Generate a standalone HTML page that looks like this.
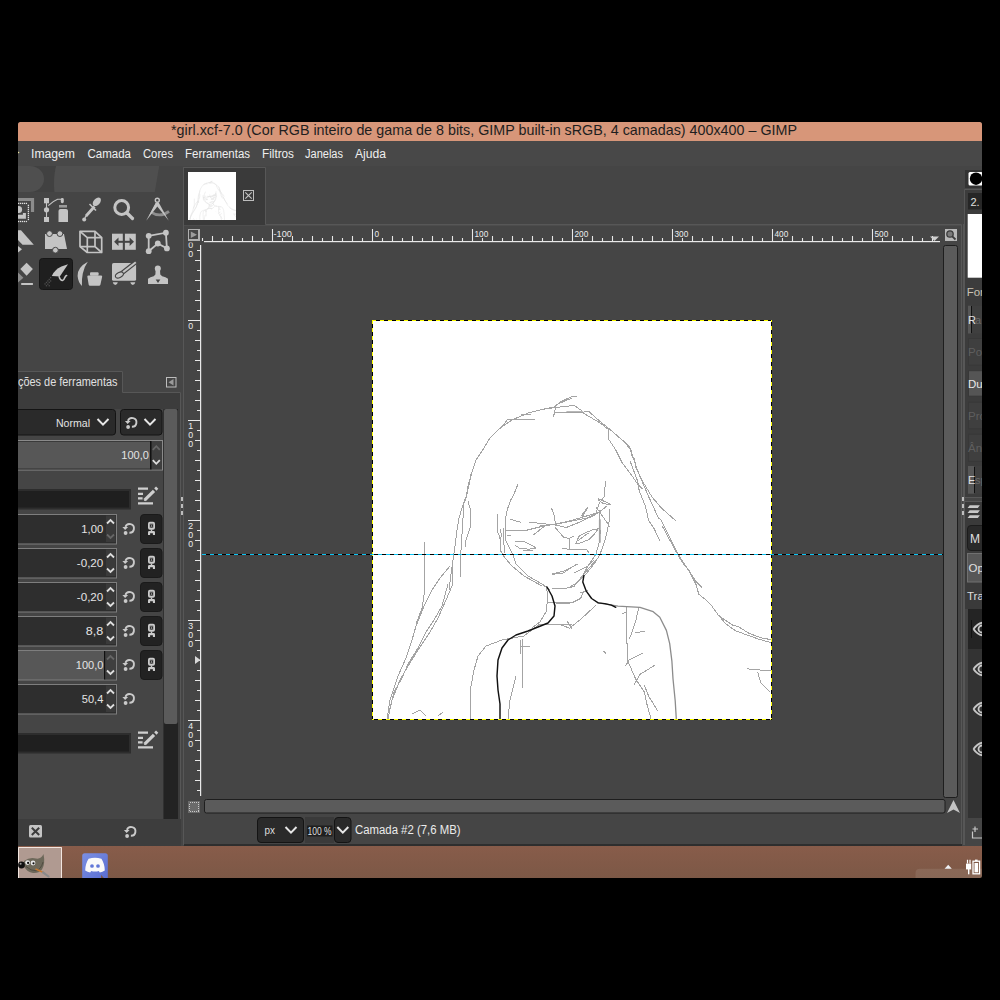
<!DOCTYPE html>
<html><head><meta charset="utf-8">
<style>
*{margin:0;padding:0;box-sizing:border-box}
html,body{width:1000px;height:1000px;background:#000;overflow:hidden}
svg{position:absolute;left:0;top:0;font-family:"Liberation Sans",sans-serif}
</style></head><body>
<svg width="1000" height="1000" viewBox="0 0 1000 1000">
<defs>
 <clipPath id="scr"><rect x="18" y="122" width="964" height="756"/></clipPath>
 <g id="reset"><path d="M-3.6,-1.6 A4.4,4.4 0 1 1 0.4,4.3" fill="none" stroke="#cacaca" stroke-width="1.9"/><path d="M-6.6,-1.4 L-0.9,-1.4 L-3.9,1.4 Z" fill="#cacaca"/><circle cx="-3.4" cy="4.5" r="1.9" fill="#cacaca"/></g>
 <g id="chev"><path d="M-5.5,-3 L0,2.6 L5.5,-3" fill="none" stroke="#e6e6e6" stroke-width="2"/></g>
 <g id="chain"><rect x="-2.6" y="-5.75" width="5.2" height="6" rx="1" fill="none" stroke="#cacaca" stroke-width="1.8"/><path d="M-0.9,-4.5 L0,-2.8 L0.9,-4.5 M-0.9,-0.9 L0,-2.6 L0.9,-0.9" fill="none" stroke="#bbb" stroke-width="0.6"/><path d="M-3.5,6.6 V3.9 Q-3.5,2.6 -2.2,2.6 H2.2 Q3.5,2.6 3.5,3.9 V6.6 H1.4 V4.7 H-1.4 V6.6 Z" fill="#cacaca"/><rect x="-0.7" y="1" width="1.4" height="1.8" fill="#cacaca"/></g>
 <g id="edit"><path d="M0,1.6 h10 M0,6.8 h5 M0,11.4 h4.6 M0,16.4 h15" stroke="#cfcfcf" stroke-width="2.3"/><path d="M6.6,13.2 L16,3.8" stroke="#cfcfcf" stroke-width="3.2"/><path d="M17.3,2.5 L19.2,0.6" stroke="#cfcfcf" stroke-width="3.2"/><path d="M5.8,12.6 L6.2,14 L7.5,13.6 Z" fill="#cfcfcf"/></g>
 <g id="upch"><path d="M-3.5,1.8 L0,-1.8 L3.5,1.8" fill="none" stroke-width="1.8"/></g>
</defs>
<g clip-path="url(#scr)">
<!-- screen base -->
<path d="M18,124.5 Q18,122 20.5,122 H979.5 Q982,122 982,124.5 V878 H18 Z" fill="#454545"/>
<!-- title bar -->
<rect x="18" y="141" width="964" height="25" fill="#484848"/>
<path d="M18,124.5 Q18,122 20.5,122 H979.5 Q982,122 982,124.5 V141 H18 Z" fill="#D79679"/>
<text x="171" y="135" font-size="14.3" fill="#1e1e1e" textLength="626" lengthAdjust="spacingAndGlyphs">*girl.xcf-7.0 (Cor RGB inteiro de gama de 8 bits, GIMP built-in sRGB, 4 camadas) 400x400 – GIMP</text>
<!-- menu -->
<g font-size="12.5" fill="#efefef">
<text x="31" y="158" textLength="44" lengthAdjust="spacingAndGlyphs">Imagem</text>
<text x="87.5" y="158" textLength="43.5" lengthAdjust="spacingAndGlyphs">Camada</text>
<text x="143" y="158" textLength="30" lengthAdjust="spacingAndGlyphs">Cores</text>
<text x="185" y="158" textLength="65" lengthAdjust="spacingAndGlyphs">Ferramentas</text>
<text x="262" y="158" textLength="32" lengthAdjust="spacingAndGlyphs">Filtros</text>
<text x="305" y="158" textLength="38" lengthAdjust="spacingAndGlyphs">Janelas</text>
<text x="355" y="158" textLength="31" lengthAdjust="spacingAndGlyphs">Ajuda</text>
</g>
<circle cx="18.5" cy="152.5" r="0.8" fill="#e8e0a0"/>

<!-- ===== LEFT DOCK ===== -->
<!-- toolbox wilber area -->
<path d="M28,166 H56 Q53,179 54.5,192 H28 Z" fill="#414141"/><path d="M18,166 H30 A14,13 0 0 1 44,179 A14,13 0 0 1 30,192 H18 Z" fill="#4f4f4f"/>
<path d="M56,166 H159.2 L154.8,192 H54.5 Q53,179 56,166 Z" fill="#4f4f4f"/>
<!-- selected tool bg -->
<rect x="39.5" y="258.5" width="33" height="31" rx="3" fill="#1f1f1f" stroke="#161616"/>

<!-- tool options tab -->
<rect x="18" y="392" width="163" height="427" fill="#3c3c3c"/>
<rect x="18" y="371" width="105" height="21" fill="#3c3c3c"/>
<path d="M18,371.5 H122.5 V392.5 H180.5 V819" fill="none" stroke="#575757"/>
<text x="18" y="386" font-size="12.5" fill="#e0e0e0" textLength="99.5" lengthAdjust="spacingAndGlyphs">ções de ferramentas</text>
<rect x="166.5" y="377.5" width="9.5" height="9.5" fill="#454545" stroke="#bdbdbd"/>
<path d="M168.5,382.2 L173.5,379 V385.5 Z" fill="#9a9a9a"/>

<rect x="18" y="409" width="145.5" height="410" fill="#454545"/>
<!-- Mode combo -->
<rect x="14" y="409.5" width="101.5" height="25.5" rx="3" fill="#2a2a2a" stroke="#141414"/>
<text x="56" y="426.5" font-size="11.5" fill="#e4e4e4" textLength="34" lengthAdjust="spacingAndGlyphs">Normal</text>
<use href="#chev" x="103" y="422"/>
<rect x="120.5" y="409.5" width="41.5" height="25.5" rx="3" fill="#2a2a2a" stroke="#141414"/>
<use href="#reset" x="131.5" y="422.5"/>
<use href="#chev" x="150" y="422"/>

<!-- opacity slider -->
<rect x="14.5" y="440.5" width="148" height="29.5" fill="#575757" stroke="#8a8a8a"/><rect x="14" y="441" width="136" height="1" fill="#3a3a3a"/><rect x="14" y="468.5" width="136" height="1" fill="#333"/>
<rect x="150.5" y="441" width="11.5" height="28.5" fill="#3f3f3f"/>
<rect x="150" y="441" width="1.5" height="28.5" fill="#111"/>
<text x="121.3" y="459" font-size="11.5" fill="#e4e4e4" textLength="27.5" lengthAdjust="spacingAndGlyphs">100,0</text>
<use href="#upch" x="156.3" y="448" stroke="#666"/>
<use href="#upch" x="156.3" y="462" stroke="#dddddd" transform="translate(0,924) scale(1,-1)"/>

<!-- brush entry -->
<rect x="14" y="489" width="117" height="20.5" fill="#2d2d2d"/><rect x="14" y="491" width="115" height="16.5" fill="#1f1f1f"/>
<use href="#edit" x="138" y="487"/>

<g id="spins"></g>
<!-- scrollbar left dock -->
<rect x="163.5" y="409" width="14.5" height="410" fill="#232323"/>
<rect x="164" y="409" width="13.5" height="315" rx="2" fill="#5b5b5b"/>

<!-- left dock bottom bar -->
<rect x="18" y="819" width="163" height="27" fill="#3d3d3d"/>
<rect x="29" y="825" width="13" height="12.5" rx="1.5" fill="#c4c4c4"/>
<path d="M31.8,827.8 L39.2,835 M39.2,827.8 L31.8,835" stroke="#3d3d3d" stroke-width="2"/>
<use href="#reset" x="130.5" y="831.5"/>

<!-- separator -->
<rect x="181" y="497" width="2" height="4" fill="#bdbdbd"/><rect x="181" y="504" width="2" height="4" fill="#bdbdbd"/><rect x="181" y="511" width="2" height="4" fill="#bdbdbd"/>
<rect x="183" y="167" width="1" height="678" fill="#575757"/>

<!-- taskbar -->
<rect x="18" y="846" width="964" height="32" fill="#8A5D4A"/>

<rect x="14.5" y="514.5" width="102" height="29.5" fill="#2e2e2e" stroke="#7e7e7e"/>
<rect x="106" y="515.5" width="9.5" height="26.5" fill="#3a3a3a"/>
<text x="81.3" y="533" font-size="11.5" fill="#e4e4e4" textLength="22" lengthAdjust="spacingAndGlyphs">1,00</text>
<path d="M107,523.5 L110.5,520 L114,523.5" fill="none" stroke="#dddddd" stroke-width="1.8"/>
<path d="M107,534.5 L110.5,538 L114,534.5" fill="none" stroke="#666" stroke-width="1.8"/>
<use href="#reset" x="129" y="528.5"/>
<rect x="140.5" y="514.5" width="21.5" height="29" rx="3.5" fill="#222" stroke="#1a1a1a"/>
<use href="#chain" x="151.5" y="528.5"/>
<rect x="14.5" y="548.5" width="102" height="29.5" fill="#2e2e2e" stroke="#7e7e7e"/>
<rect x="106" y="549.5" width="9.5" height="26.5" fill="#3a3a3a"/>
<text x="76.8" y="567" font-size="11.5" fill="#e4e4e4" textLength="26.5" lengthAdjust="spacingAndGlyphs">-0,20</text>
<path d="M107,557.5 L110.5,554 L114,557.5" fill="none" stroke="#dddddd" stroke-width="1.8"/>
<path d="M107,568.5 L110.5,572 L114,568.5" fill="none" stroke="#dddddd" stroke-width="1.8"/>
<use href="#reset" x="129" y="562.5"/>
<rect x="140.5" y="548.5" width="21.5" height="29" rx="3.5" fill="#222" stroke="#1a1a1a"/>
<use href="#chain" x="151.5" y="562.5"/>
<rect x="14.5" y="582.5" width="102" height="29.5" fill="#2e2e2e" stroke="#7e7e7e"/>
<rect x="106" y="583.5" width="9.5" height="26.5" fill="#3a3a3a"/>
<text x="76.8" y="601" font-size="11.5" fill="#e4e4e4" textLength="26.5" lengthAdjust="spacingAndGlyphs">-0,20</text>
<path d="M107,591.5 L110.5,588 L114,591.5" fill="none" stroke="#dddddd" stroke-width="1.8"/>
<path d="M107,602.5 L110.5,606 L114,602.5" fill="none" stroke="#dddddd" stroke-width="1.8"/>
<use href="#reset" x="129" y="596.5"/>
<rect x="140.5" y="582.5" width="21.5" height="29" rx="3.5" fill="#222" stroke="#1a1a1a"/>
<use href="#chain" x="151.5" y="596.5"/>
<rect x="14.5" y="616.5" width="102" height="29.5" fill="#2e2e2e" stroke="#7e7e7e"/>
<rect x="106" y="617.5" width="9.5" height="26.5" fill="#3a3a3a"/>
<text x="85.8" y="635" font-size="11.5" fill="#e4e4e4" textLength="17.5" lengthAdjust="spacingAndGlyphs">8,8</text>
<path d="M107,625.5 L110.5,622 L114,625.5" fill="none" stroke="#dddddd" stroke-width="1.8"/>
<path d="M107,636.5 L110.5,640 L114,636.5" fill="none" stroke="#dddddd" stroke-width="1.8"/>
<use href="#reset" x="129" y="630.5"/>
<rect x="140.5" y="616.5" width="21.5" height="29" rx="3.5" fill="#222" stroke="#1a1a1a"/>
<use href="#chain" x="151.5" y="630.5"/>
<rect x="14.5" y="650.5" width="102" height="29.5" fill="#575757" stroke="#7e7e7e"/>
<rect x="104" y="651" width="1.5" height="28.5" fill="#111"/>
<rect x="105.5" y="651" width="10.5" height="28.5" fill="#3f3f3f"/>
<text x="75.8" y="669" font-size="11.5" fill="#e4e4e4" textLength="27.5" lengthAdjust="spacingAndGlyphs">100,0</text>
<path d="M107,659.5 L110.5,656 L114,659.5" fill="none" stroke="#666" stroke-width="1.8"/>
<path d="M107,670.5 L110.5,674 L114,670.5" fill="none" stroke="#dddddd" stroke-width="1.8"/>
<use href="#reset" x="129" y="664.5"/>
<rect x="140.5" y="650.5" width="21.5" height="29" rx="3.5" fill="#222" stroke="#1a1a1a"/>
<use href="#chain" x="151.5" y="664.5"/>
<rect x="14.5" y="684.5" width="102" height="29.5" fill="#2e2e2e" stroke="#7e7e7e"/>
<rect x="106" y="685.5" width="9.5" height="26.5" fill="#3a3a3a"/>
<text x="81.8" y="703" font-size="11.5" fill="#e4e4e4" textLength="21.5" lengthAdjust="spacingAndGlyphs">50,4</text>
<path d="M107,693.5 L110.5,690 L114,693.5" fill="none" stroke="#dddddd" stroke-width="1.8"/>
<path d="M107,704.5 L110.5,708 L114,704.5" fill="none" stroke="#dddddd" stroke-width="1.8"/>
<use href="#reset" x="129" y="698.5"/>
<rect x="14" y="733" width="117" height="20.5" fill="#2d2d2d"/><rect x="14" y="735" width="115" height="16.5" fill="#1f1f1f"/>
<use href="#edit" x="138" y="731"/>
<rect x="184" y="168" width="81" height="57" fill="#3a3a3a"/>
<path d="M183.5,845 V167.5 H265.5 V224.5 H961.5 V845" fill="none" stroke="#575757"/>
<rect x="188" y="172" width="48" height="48" fill="#fff"/>
<rect x="243.5" y="190.5" width="10" height="10" fill="none" stroke="#bdbdbd" stroke-width="1.2" shape-rendering="crispEdges"/>
<path d="M245.3,192.3 L251.7,198.7 M251.7,192.3 L245.3,198.7" stroke="#c4c4c4" stroke-width="1.1"/>
<rect x="184" y="225" width="777" height="1" fill="#4d4d4d"/>
<rect x="188.5" y="229.5" width="10.5" height="10.5" fill="#454545" stroke="#b0b0b0" stroke-width="1.1" shape-rendering="crispEdges"/>
<path d="M190.8,231.5 L197,234.7 L190.8,238 Z" fill="#9c9c9c"/>
<rect x="204" y="241" width="736" height="1.2" fill="#e8e8e8"/>
<path d="M202.5,238 V241 M212.5,236 V241 M222.5,238 V241 M232.5,236 V241 M242.5,238 V241 M252.5,236 V241 M262.5,238 V241 M272.5,229 V241 M282.5,238 V241 M292.5,236 V241 M302.5,238 V241 M312.5,236 V241 M322.5,238 V241 M332.5,236 V241 M342.5,238 V241 M352.5,236 V241 M362.5,238 V241 M372.5,229 V241 M382.5,238 V241 M392.5,236 V241 M402.5,238 V241 M412.5,236 V241 M422.5,238 V241 M432.5,236 V241 M442.5,238 V241 M452.5,236 V241 M462.5,238 V241 M472.5,229 V241 M482.5,238 V241 M492.5,236 V241 M502.5,238 V241 M512.5,236 V241 M522.5,238 V241 M532.5,236 V241 M542.5,238 V241 M552.5,236 V241 M562.5,238 V241 M572.5,229 V241 M582.5,238 V241 M592.5,236 V241 M602.5,238 V241 M612.5,236 V241 M622.5,238 V241 M632.5,236 V241 M642.5,238 V241 M652.5,236 V241 M662.5,238 V241 M672.5,229 V241 M682.5,238 V241 M692.5,236 V241 M702.5,238 V241 M712.5,236 V241 M722.5,238 V241 M732.5,236 V241 M742.5,238 V241 M752.5,236 V241 M762.5,238 V241 M772.5,229 V241 M782.5,238 V241 M792.5,236 V241 M802.5,238 V241 M812.5,236 V241 M822.5,238 V241 M832.5,236 V241 M842.5,238 V241 M852.5,236 V241 M862.5,238 V241 M872.5,229 V241 M882.5,238 V241 M892.5,236 V241 M902.5,238 V241 M912.5,236 V241 M922.5,238 V241 M932.5,236 V241" stroke="#e8e8e8" stroke-width="1.1" fill="none"/>
<text x="273.5" y="237.2" font-size="9" fill="#ebebeb" textLength="18.3" lengthAdjust="spacingAndGlyphs">-100</text>
<text x="374.5" y="237.2" font-size="9" fill="#ebebeb" textLength="4.6" lengthAdjust="spacingAndGlyphs">0</text>
<text x="474.5" y="237.2" font-size="9" fill="#ebebeb" textLength="13.8" lengthAdjust="spacingAndGlyphs">100</text>
<text x="574.5" y="237.2" font-size="9" fill="#ebebeb" textLength="13.8" lengthAdjust="spacingAndGlyphs">200</text>
<text x="674.5" y="237.2" font-size="9" fill="#ebebeb" textLength="13.8" lengthAdjust="spacingAndGlyphs">300</text>
<text x="774.5" y="237.2" font-size="9" fill="#ebebeb" textLength="13.8" lengthAdjust="spacingAndGlyphs">400</text>
<text x="874.5" y="237.2" font-size="9" fill="#ebebeb" textLength="13.8" lengthAdjust="spacingAndGlyphs">500</text>
<path d="M930,236.5 H939 L934.5,241 Z" fill="#d0d0d0"/>
<rect x="945" y="229" width="12" height="12" fill="#b8b8b8"/>
<circle cx="950" cy="234" r="3.2" fill="#7a7a7a" stroke="#3c3c3c" stroke-width="1.3"/><path d="M952.3,236.3 L955.5,239.5" stroke="#3c3c3c" stroke-width="1.8"/>
<rect x="200" y="245" width="1.2" height="551" fill="#e8e8e8"/>
<path d="M197,250.5 H200 M195,260.5 H200 M197,270.5 H200 M195,280.5 H200 M197,290.5 H200 M195,300.5 H200 M197,310.5 H200 M188,320.5 H200 M197,330.5 H200 M195,340.5 H200 M197,350.5 H200 M195,360.5 H200 M197,370.5 H200 M195,380.5 H200 M197,390.5 H200 M195,400.5 H200 M197,410.5 H200 M188,420.5 H200 M197,430.5 H200 M195,440.5 H200 M197,450.5 H200 M195,460.5 H200 M197,470.5 H200 M195,480.5 H200 M197,490.5 H200 M195,500.5 H200 M197,510.5 H200 M188,520.5 H200 M197,530.5 H200 M195,540.5 H200 M197,550.5 H200 M195,560.5 H200 M197,570.5 H200 M195,580.5 H200 M197,590.5 H200 M195,600.5 H200 M197,610.5 H200 M188,620.5 H200 M197,630.5 H200 M195,640.5 H200 M197,650.5 H200 M195,660.5 H200 M197,670.5 H200 M195,680.5 H200 M197,690.5 H200 M195,700.5 H200 M197,710.5 H200 M188,720.5 H200 M197,730.5 H200 M195,740.5 H200 M197,750.5 H200 M195,760.5 H200 M197,770.5 H200 M195,780.5 H200 M197,790.5 H200" stroke="#e8e8e8" stroke-width="1.1" fill="none"/>
<clipPath id="lrc"><rect x="184" y="242.5" width="17" height="553"/></clipPath><g clip-path="url(#lrc)">
<text x="188.3" y="247.8" font-size="9.6" fill="#ebebeb" textLength="4.9" lengthAdjust="spacingAndGlyphs">0</text>
<text x="188.3" y="257.0" font-size="9.6" fill="#ebebeb" textLength="4.9" lengthAdjust="spacingAndGlyphs">0</text>
<text x="188.3" y="328.8" font-size="9.6" fill="#ebebeb" textLength="4.9" lengthAdjust="spacingAndGlyphs">0</text>
<text x="188.3" y="428.8" font-size="9.6" fill="#ebebeb" textLength="4.9" lengthAdjust="spacingAndGlyphs">1</text>
<text x="188.3" y="437.9" font-size="9.6" fill="#ebebeb" textLength="4.9" lengthAdjust="spacingAndGlyphs">0</text>
<text x="188.3" y="447.0" font-size="9.6" fill="#ebebeb" textLength="4.9" lengthAdjust="spacingAndGlyphs">0</text>
<text x="188.3" y="528.8" font-size="9.6" fill="#ebebeb" textLength="4.9" lengthAdjust="spacingAndGlyphs">2</text>
<text x="188.3" y="537.9" font-size="9.6" fill="#ebebeb" textLength="4.9" lengthAdjust="spacingAndGlyphs">0</text>
<text x="188.3" y="547.0" font-size="9.6" fill="#ebebeb" textLength="4.9" lengthAdjust="spacingAndGlyphs">0</text>
<text x="188.3" y="628.8" font-size="9.6" fill="#ebebeb" textLength="4.9" lengthAdjust="spacingAndGlyphs">3</text>
<text x="188.3" y="637.9" font-size="9.6" fill="#ebebeb" textLength="4.9" lengthAdjust="spacingAndGlyphs">0</text>
<text x="188.3" y="647.0" font-size="9.6" fill="#ebebeb" textLength="4.9" lengthAdjust="spacingAndGlyphs">0</text>
<text x="188.3" y="728.8" font-size="9.6" fill="#ebebeb" textLength="4.9" lengthAdjust="spacingAndGlyphs">4</text>
<text x="188.3" y="737.9" font-size="9.6" fill="#ebebeb" textLength="4.9" lengthAdjust="spacingAndGlyphs">0</text>
<text x="188.3" y="747.0" font-size="9.6" fill="#ebebeb" textLength="4.9" lengthAdjust="spacingAndGlyphs">0</text>
</g>
<rect x="188" y="801" width="12" height="12" fill="#6a6a6a"/>
<rect x="189.5" y="802.5" width="9" height="9" fill="none" stroke="#c8c8c8" stroke-width="1" stroke-dasharray="1,1" shape-rendering="crispEdges"/>
<rect x="204.5" y="799.5" width="740.5" height="13.5" rx="2" fill="#5b5b5b" stroke="#1e1e1e"/>
<rect x="943.5" y="245.5" width="14" height="552" rx="2" fill="#5b5b5b" stroke="#1e1e1e"/>
<path d="M953.5,800 L960,813 L953.5,809.5 L947,813 Z" fill="#c4c4c4"/>
<rect x="257.5" y="817.5" width="46" height="25" rx="3.5" fill="#2a2a2a" stroke="#141414"/>
<text x="264.5" y="834" font-size="10.5" fill="#dedede" textLength="10.5" lengthAdjust="spacingAndGlyphs">px</text>
<use href="#chev" x="291" y="830"/>
<rect x="305" y="817" width="29" height="26" fill="#3a3a3a"/>
<rect x="307" y="825.5" width="25.5" height="11" fill="#1f1f1f"/>
<text x="307.5" y="835" font-size="10" fill="#dedede" textLength="24" lengthAdjust="spacingAndGlyphs">100 %</text>
<rect x="334.5" y="817.5" width="16.5" height="25" rx="3.5" fill="#2a2a2a" stroke="#141414"/>
<use href="#chev" x="342.8" y="830"/>
<text x="355" y="834" font-size="12.5" fill="#ebebeb" textLength="105.5" lengthAdjust="spacingAndGlyphs">Camada #2 (7,6 MB)</text>
<rect x="184" y="844" width="778" height="2" fill="#2e2e2e"/>
<path d="M195,656 L200.5,660 L195,664 Z" fill="#d8d8d8"/>
<g transform="translate(143.360,133.600) scale(0.12)" fill="none" stroke="#e3e3e3" stroke-width="4.5">
<polyline points="572,398 558,404 554,407 544,409 528,413 512,420 500,428 490,438 484,448 476,460 472,472 468,486 466,498 462,508 459,518 457,530 455,546 453,560 451,574 449,590"/>
<polyline points="535,419 508,419 500,429"/>
<polyline points="521,414.5 531,414"/>
<polyline points="471,474 470,480 467,494 464,502 463,518 462,534 461,550 460,566 460,577"/>
<polyline points="468,501 470,508 470,528 466,540 465,547"/>
<polyline points="424.5,542 424.5,592 422,608 416,624"/>
<polyline points="497,514 497,530 500,538 500,550 505,558 512,566 524,576 542,586"/>
<polyline points="552,588.6 565,588.6 574,586.4 582.8,575.4 596,560"/>
<polyline points="552,574.3 563,573.2 576.2,564.4"/>
<polyline points="574,573.2 587.2,566.6 593.8,560"/>
<polyline points="556.4,604 571.8,602.9 580.6,598.5 583.9,590.8"/>
<polyline points="580.6,593 587.2,590.8"/>
<polyline points="552,624.9 560.8,624.9 569.6,628.2 580.6,619.4 596,605.1"/>
<polyline points="567.4,621.6 571.8,628.2"/>
<polyline points="548,602 572,603"/>
<polyline points="626.8,607.3 626.8,639.2 627.9,661.2 635.6,678.8 644.4,692 646.6,703 651,719"/>
<polyline points="638.9,607.3 635.6,621.6 631.2,634.8 629,639.2"/>
<polyline points="635.6,632.6 644.4,631.5"/>
<polyline points="622.4,613.9 626.8,611.7"/>
<polyline points="625.7,665.6 629,660.1 642.2,653.5"/>
<polyline points="634.5,684.3 640,674.4 654.3,665.6"/>
<polyline points="644.4,685.4 648.8,696.4 657.6,710.7"/>
<polyline points="603.7,651.3 605.9,653.5"/>
<polyline points="747.8,668.9 772,671.1"/>
<polyline points="757.7,672.2 761,683.2 769.8,692"/>
<polyline points="546,586 548,596 546,612 540,622 532,628"/>
<polyline points="486,646 502,640 524,636 540,624 572,624"/>
<polyline points="486,646 478,656 474,670 471,686 470,700 471,719"/>
<polyline points="522,638 523,688"/>
<polyline points="520,640 520,654"/>
<polyline points="530,646 520,646"/>
<polyline points="516,676 510,700 508,719"/>
<polyline points="452,560 452,586 446,600 438,618 430,632 418,650 408,666 400,680 392,700 388,719"/>
<polyline points="450,566 440,578 432,590 424,606 416,626 412,640 406,658 398,676 390,700 387,719"/>
<polyline points="448,584 442,606 434,620 426,632 418,648 408,664 402,678 394,692 389,712"/>
<polyline points="460,556 460,576"/>
<polyline points="412,714 420,710 426,716"/>
<polyline points="438,716 443,712"/>
<polyline points="540,409.8 556,407.4 574.4,405.5 581.6,410.6"/>
<polyline points="576.8,396.2 572,396.5 565.6,399.4 559.2,402.6 556,405.8 554.4,412.2 553.6,417"/>
<polyline points="554.4,413 567.2,412.2 582.4,412.2 588.8,411.4 597.6,419.4 610.4,429.8 623.2,441 629.6,446.6 632,455.4 634.4,458.6 636,468.2 642.4,481 652,497 661.6,508.2 676,521"/>
<polyline points="583.2,413 600.8,423.4 608.8,429.8 608.8,439.4 615.2,449 621.6,461.8 631.2,474.6 637.6,484.2 642.4,489"/>
<polyline points="623.2,440.2 631.2,450.6 632.8,457 639.2,474.6 648.8,497 658.4,517.8 661,520 665.2,528.4 673.6,545.2 677.8,553.6 684.8,564.8 690.4,573.2 696,581.6 701.6,587.2"/>
<polyline points="630.4,461.8 637.6,481 639.2,490.6 645.6,506.6 648.4,520 654,528.4 659.6,540.3"/>
<polyline points="662.4,526.3 668,536.8 676.4,552.2 682,562 689,570.4 696,584.4 698.8,594.2 705.8,599.8 711.4,605.4 718.4,615.2 724,619.4 732.4,625 738,626.4 749.2,633.4 760.4,637.6 771,639.7"/>
<polyline points="719.8,616.6 725.4,623.6 735.2,630.6 746.4,634.8 760.4,639.7 771,642.5"/>
<polyline points="518,484 514,494 510.8,500 507.2,509.6 505.4,519.2 505.4,531.2 506,540.8 509.6,548 513.2,555.2 516,564 528,576 542,584 550,590"/>
<polyline points="551.6,508.4 554.6,516.8 555.2,522.8"/>
<polyline points="506,530 527.6,530 542,526.4 555.2,524 567.2,521.6 584,516.8 599.6,512 606.8,506"/>
<polyline points="529.4,522.2 545.6,524 556.4,525.2 566,527.6 578,522.8 593.6,515.6 600.8,510.8"/>
<polyline points="533.6,534.8 545.6,525.2"/>
<polyline points="510.2,519.2 520.4,522.2"/>
<polyline points="581.6,515.6 587.6,507.2"/>
<polyline points="555.2,527.6 563.6,537.2 569,538.4 573.2,536.6"/>
<polyline points="569.6,538.4 569.6,549.2"/>
<polyline points="562.4,548.6 569.6,549.2 586.4,549.2 588.8,552.8"/>
<polyline points="515,541.4 524,541.4 532.4,545.6 536,548 528.8,549.2 519.2,548 515.6,545.6"/>
<polyline points="522.8,551 532.4,550.4"/>
<polyline points="575.6,543.8 579.2,536 586.4,532.4 593.6,529.4 598.4,528.8 594.8,533.6 588.8,539.6 581.6,542.6 575.6,543.8"/>
<polyline points="578,540.8 584,536 588.8,533"/>
<polyline points="500,528.8 501.8,536 500,538.4"/>
<polyline points="503.6,528.8 504.2,552.8"/>
<polyline points="507.2,536 510.8,535.4"/>
<polyline points="599.6,510.8 599.6,524 600.2,532.4 599,543.2 596,554 588,566 583,575"/>
<polyline points="596,507.2 599.6,512 608,524 609.2,526.4"/>
<polyline points="609.2,509.6 609.8,518 606.8,533.6 603.2,545.6 599.6,555.2 594,564 586,574 578,582 568,588"/>
<polyline points="598.4,500 603.2,503.6 610.4,504.8"/>
<polyline points="605.6,481 604,497 599.2,503.4 596,513 588,517.8 556,524.2 540,525.8"/>
<polyline points="598.4,498.6 610.4,504.2"/>
<polyline points="588,507.4 581.6,517.8"/>
<polyline points="552,574 564,571 578,564"/>
<polyline points="598.2,602.9 618,606.2 640,607.3 653.2,611.7 659.8,617.2 666.4,630.4 669.7,643.6 671.9,661.2 673,678.8 675.2,700.8 676.3,719"/>
<polyline points="547,587 552,596 555,606 554,616 548,623 538,627 528,631 516,635 508,640 502,648 498,660 497,676 498,690 500,704 500,719"/>
<polyline points="583.9,575.4 582.8,582 586.1,590.8 591.6,598.5 598.2,602.9 604.8,603.6 611.4,605.1 615.8,607.3"/>
</g>
<rect x="372" y="320" width="400" height="400" fill="#fff"/>
<g fill="none" stroke-linejoin="round" stroke-linecap="round">
<g stroke="#a4a4a4" stroke-width="1" shape-rendering="crispEdges">
<polyline points="572,398 558,404 554,407 544,409 528,413 512,420 500,428 490,438 484,448 476,460 472,472 468,486 466,498 462,508 459,518 457,530 455,546 453,560 451,574 449,590"/>
<polyline points="535,419 508,419 500,429"/>
<polyline points="521,414.5 531,414"/>
<polyline points="471,474 470,480 467,494 464,502 463,518 462,534 461,550 460,566 460,577"/>
<polyline points="468,501 470,508 470,528 466,540 465,547"/>
<polyline points="424.5,542 424.5,592 422,608 416,624"/>
<polyline points="497,514 497,530 500,538 500,550 505,558 512,566 524,576 542,586"/>
<polyline points="552,588.6 565,588.6 574,586.4 582.8,575.4 596,560"/>
<polyline points="552,574.3 563,573.2 576.2,564.4"/>
<polyline points="574,573.2 587.2,566.6 593.8,560"/>
<polyline points="556.4,604 571.8,602.9 580.6,598.5 583.9,590.8"/>
<polyline points="580.6,593 587.2,590.8"/>
<polyline points="552,624.9 560.8,624.9 569.6,628.2 580.6,619.4 596,605.1"/>
<polyline points="567.4,621.6 571.8,628.2"/>
<polyline points="548,602 572,603"/>
<polyline points="626.8,607.3 626.8,639.2 627.9,661.2 635.6,678.8 644.4,692 646.6,703 651,719"/>
<polyline points="638.9,607.3 635.6,621.6 631.2,634.8 629,639.2"/>
<polyline points="635.6,632.6 644.4,631.5"/>
<polyline points="622.4,613.9 626.8,611.7"/>
<polyline points="625.7,665.6 629,660.1 642.2,653.5"/>
<polyline points="634.5,684.3 640,674.4 654.3,665.6"/>
<polyline points="644.4,685.4 648.8,696.4 657.6,710.7"/>
<polyline points="603.7,651.3 605.9,653.5"/>
<polyline points="747.8,668.9 772,671.1"/>
<polyline points="757.7,672.2 761,683.2 769.8,692"/>
<polyline points="546,586 548,596 546,612 540,622 532,628"/>
<polyline points="486,646 502,640 524,636 540,624 572,624"/>
<polyline points="486,646 478,656 474,670 471,686 470,700 471,719"/>
<polyline points="522,638 523,688"/>
<polyline points="520,640 520,654"/>
<polyline points="530,646 520,646"/>
<polyline points="516,676 510,700 508,719"/>
<polyline points="452,560 452,586 446,600 438,618 430,632 418,650 408,666 400,680 392,700 388,719"/>
<polyline points="450,566 440,578 432,590 424,606 416,626 412,640 406,658 398,676 390,700 387,719"/>
<polyline points="448,584 442,606 434,620 426,632 418,648 408,664 402,678 394,692 389,712"/>
<polyline points="460,556 460,576"/>
<polyline points="412,714 420,710 426,716"/>
<polyline points="438,716 443,712"/>
<polyline points="540,409.8 556,407.4 574.4,405.5 581.6,410.6"/>
<polyline points="576.8,396.2 572,396.5 565.6,399.4 559.2,402.6 556,405.8 554.4,412.2 553.6,417"/>
<polyline points="554.4,413 567.2,412.2 582.4,412.2 588.8,411.4 597.6,419.4 610.4,429.8 623.2,441 629.6,446.6 632,455.4 634.4,458.6 636,468.2 642.4,481 652,497 661.6,508.2 676,521"/>
<polyline points="583.2,413 600.8,423.4 608.8,429.8 608.8,439.4 615.2,449 621.6,461.8 631.2,474.6 637.6,484.2 642.4,489"/>
<polyline points="623.2,440.2 631.2,450.6 632.8,457 639.2,474.6 648.8,497 658.4,517.8 661,520 665.2,528.4 673.6,545.2 677.8,553.6 684.8,564.8 690.4,573.2 696,581.6 701.6,587.2"/>
<polyline points="630.4,461.8 637.6,481 639.2,490.6 645.6,506.6 648.4,520 654,528.4 659.6,540.3"/>
<polyline points="662.4,526.3 668,536.8 676.4,552.2 682,562 689,570.4 696,584.4 698.8,594.2 705.8,599.8 711.4,605.4 718.4,615.2 724,619.4 732.4,625 738,626.4 749.2,633.4 760.4,637.6 771,639.7"/>
<polyline points="719.8,616.6 725.4,623.6 735.2,630.6 746.4,634.8 760.4,639.7 771,642.5"/>
<polyline points="518,484 514,494 510.8,500 507.2,509.6 505.4,519.2 505.4,531.2 506,540.8 509.6,548 513.2,555.2 516,564 528,576 542,584 550,590"/>
<polyline points="551.6,508.4 554.6,516.8 555.2,522.8"/>
<polyline points="506,530 527.6,530 542,526.4 555.2,524 567.2,521.6 584,516.8 599.6,512 606.8,506"/>
<polyline points="529.4,522.2 545.6,524 556.4,525.2 566,527.6 578,522.8 593.6,515.6 600.8,510.8"/>
<polyline points="533.6,534.8 545.6,525.2"/>
<polyline points="510.2,519.2 520.4,522.2"/>
<polyline points="581.6,515.6 587.6,507.2"/>
<polyline points="555.2,527.6 563.6,537.2 569,538.4 573.2,536.6"/>
<polyline points="569.6,538.4 569.6,549.2"/>
<polyline points="562.4,548.6 569.6,549.2 586.4,549.2 588.8,552.8"/>
<polyline points="515,541.4 524,541.4 532.4,545.6 536,548 528.8,549.2 519.2,548 515.6,545.6"/>
<polyline points="522.8,551 532.4,550.4"/>
<polyline points="575.6,543.8 579.2,536 586.4,532.4 593.6,529.4 598.4,528.8 594.8,533.6 588.8,539.6 581.6,542.6 575.6,543.8"/>
<polyline points="578,540.8 584,536 588.8,533"/>
<polyline points="500,528.8 501.8,536 500,538.4"/>
<polyline points="503.6,528.8 504.2,552.8"/>
<polyline points="507.2,536 510.8,535.4"/>
<polyline points="599.6,510.8 599.6,524 600.2,532.4 599,543.2 596,554 588,566 583,575"/>
<polyline points="596,507.2 599.6,512 608,524 609.2,526.4"/>
<polyline points="609.2,509.6 609.8,518 606.8,533.6 603.2,545.6 599.6,555.2 594,564 586,574 578,582 568,588"/>
<polyline points="598.4,500 603.2,503.6 610.4,504.8"/>
<polyline points="605.6,481 604,497 599.2,503.4 596,513 588,517.8 556,524.2 540,525.8"/>
<polyline points="598.4,498.6 610.4,504.2"/>
<polyline points="588,507.4 581.6,517.8"/>
<polyline points="552,574 564,571 578,564"/>
</g><g stroke="#a0a0a0" stroke-width="1.8">
<polyline points="567,412.2 582.4,412.2"/>
<polyline points="599.8,520 599.8,542"/>
</g><g stroke="#8c8c8c" stroke-width="1.3">
<polyline points="598.2,602.9 618,606.2 640,607.3 653.2,611.7 659.8,617.2 666.4,630.4 669.7,643.6 671.9,661.2 673,678.8 675.2,700.8 676.3,719"/>
</g><g stroke="#111" stroke-width="1.45">
<polyline points="547,587 552,596 555,606 554,616 548,623 538,627 528,631 516,635 508,640 502,648 498,660 497,676 498,690 500,704 500,719"/>
<polyline points="583.9,575.4 582.8,582 586.1,590.8 591.6,598.5 598.2,602.9 604.8,603.6 611.4,605.1 615.8,607.3"/>
</g></g>
<g shape-rendering="crispEdges">
<path d="M371.5,320.5 H771.5 V719.5 H372.5 V320" fill="none" stroke="#000" stroke-width="1"/>
<path d="M372,320.5 H772" fill="none" stroke="#ffff00" stroke-width="1" stroke-dasharray="4,4"/>
<path d="M372.5,320 V720" fill="none" stroke="#ffff00" stroke-width="1" stroke-dasharray="4,4"/>
<path d="M771,719.5 H372" fill="none" stroke="#ffff00" stroke-width="1" stroke-dasharray="4,4" stroke-dashoffset="3"/>
<path d="M771.5,719 V320" fill="none" stroke="#ffff00" stroke-width="1" stroke-dasharray="4,4" stroke-dashoffset="3"/>
<path d="M202,554.5 H943" fill="none" stroke="#000" stroke-width="1"/>
<path d="M202,554.5 H943" fill="none" stroke="#0cc4f4" stroke-width="1" stroke-dasharray="4,4"/>
</g>
<rect x="962" y="167" width="20" height="679" fill="#454545"/>
<rect x="963" y="224" width="1" height="621" fill="#575757"/>
<rect x="965" y="170" width="17" height="18" fill="#333"/>
<rect x="968.5" y="172" width="14" height="13.5" rx="1.5" fill="#fff"/>
<circle cx="976" cy="178.7" r="6.2" fill="#000"/>
<path d="M964.5,845 V189.5 H982" fill="none" stroke="#575757"/>
<rect x="965" y="190" width="17" height="307" fill="#3c3c3c"/>
<rect x="968" y="193" width="14" height="16.5" fill="#262626"/>
<text x="970.5" y="205.5" font-size="11" fill="#e0e0e0">2.</text>
<rect x="967.7" y="214" width="14.3" height="63.7" fill="#fff"/>
<text x="966.7" y="295.7" font-size="11.5" fill="#c8c2b4">For</text>
<rect x="968" y="305.7" width="14" height="27.8" fill="#3f3f3f"/>
<rect x="968" y="305.7" width="3" height="27.8" fill="#575757"/>
<rect x="971" y="306" width="1" height="27" fill="#111"/>
<text x="968" y="323.5" font-size="11" fill="#e0e0e0">R</text><text x="975" y="323.5" font-size="11" fill="#6a6a6a">a</text>
<rect x="968.5" y="338.5" width="14" height="26.7" fill="#3f3f3f" stroke="#383838"/>
<text x="968" y="356.4" font-size="11.5" fill="#5e5e5e">Por</text>
<rect x="968.5" y="370.7" width="14" height="25.5" fill="#555" stroke="#383838"/>
<text x="968" y="387.9" font-size="11.5" fill="#e8e8e8">Du</text>
<rect x="968.5" y="402.2" width="14" height="26.7" fill="#3f3f3f" stroke="#383838"/>
<text x="968" y="420.1" font-size="11.5" fill="#5e5e5e">Pro</text>
<rect x="968.5" y="434.2" width="14" height="27.1" fill="#3f3f3f" stroke="#383838"/>
<text x="968" y="452.2" font-size="11.5" fill="#5e5e5e">Ân</text>
<rect x="968" y="466" width="14" height="27.7" fill="#3f3f3f"/>
<rect x="968" y="466" width="6" height="27.7" fill="#575757"/>
<rect x="974" y="467" width="1" height="26" fill="#111"/>
<text x="968" y="484" font-size="11" fill="#e0e0e0">E</text><text x="975" y="484" font-size="11" fill="#6a6a6a">sp</text>
<rect x="965" y="497" width="17" height="1" fill="#575757"/><rect x="965" y="501" width="17" height="1" fill="#575757"/><rect x="965" y="502" width="17" height="107" fill="#3a3a3a"/><path d="M969.7,505.2 H979.9 L977.8,507.9 H967.6 Z" fill="#c8c8c8"/><path d="M969.7,510.2 H979.9 L977.8,512.9 H967.6 Z" fill="#c8c8c8"/><path d="M969.7,515.2 H979.9 L977.8,517.9000000000001 H967.6 Z" fill="#c8c8c8"/>
<rect x="962" y="497" width="2" height="4" fill="#bdbdbd"/><rect x="962" y="504" width="2" height="4" fill="#bdbdbd"/><rect x="962" y="511" width="2" height="4" fill="#bdbdbd"/>
<rect x="967.5" y="525.5" width="20" height="25" rx="3.5" fill="#2a2a2a" stroke="#1c1c1c"/>
<text x="970" y="543" font-size="12" fill="#e0e0e0">M</text>
<rect x="967.5" y="553.5" width="20" height="28.5" fill="#575757" stroke="#707070"/>
<text x="968.5" y="572" font-size="11.5" fill="#e0e0e0">Op</text>
<text x="967" y="599.5" font-size="11.5" fill="#dcdcdc">Tra</text>
<rect x="968" y="609" width="14" height="209" fill="#333"/>
<rect x="968" y="609" width="14" height="40" fill="#242424"/>
<rect x="971" y="620" width="1" height="18" fill="#111"/>
<path d="M973.5,629 Q978,622.5 984,622.5 M973.5,629 Q978,635.5 984,635.5" fill="none" stroke="#c8c8c8" stroke-width="2"/>
<circle cx="982" cy="629" r="3.5" fill="none" stroke="#c8c8c8" stroke-width="1.8"/>
<path d="M973.5,669 Q978,662.5 984,662.5 M973.5,669 Q978,675.5 984,675.5" fill="none" stroke="#c8c8c8" stroke-width="2"/>
<circle cx="982" cy="669" r="3.5" fill="none" stroke="#c8c8c8" stroke-width="1.8"/>
<path d="M973.5,709 Q978,702.5 984,702.5 M973.5,709 Q978,715.5 984,715.5" fill="none" stroke="#c8c8c8" stroke-width="2"/>
<circle cx="982" cy="709" r="3.5" fill="none" stroke="#c8c8c8" stroke-width="1.8"/>
<path d="M973.5,749 Q978,742.5 984,742.5 M973.5,749 Q978,755.5 984,755.5" fill="none" stroke="#c8c8c8" stroke-width="2"/>
<circle cx="982" cy="749" r="3.5" fill="none" stroke="#c8c8c8" stroke-width="1.8"/>
<path d="M972.5,829 H978 M975,826.5 V832 M972.5,831.5 V838 H982" fill="none" stroke="#c8c8c8" stroke-width="1.2"/>
<g fill="#c4c4c4" stroke="none">
<path d="M18,198 H34.1 V211.9 H30.9 V201 H18 Z" fill="#8c8c8c"/>
<circle cx="18.6" cy="209.5" r="3.5"/>
<path d="M18,214.8 H22.9 V213 H25.9 V218.8 H18 Z"/>
<g fill="#e0e0e0"><rect x="27.75" y="204.76" width="1.3" height="1.3"/><rect x="27.75" y="206.77" width="1.3" height="1.3"/><rect x="27.75" y="208.78" width="1.3" height="1.3"/><rect x="27.75" y="210.79" width="1.3" height="1.3"/><rect x="27.75" y="212.80" width="1.3" height="1.3"/><rect x="27.75" y="214.81" width="1.3" height="1.3"/><rect x="27.75" y="216.82" width="1.3" height="1.3"/><rect x="27.75" y="218.83" width="1.3" height="1.3"/><rect x="17.75" y="202.75" width="1.3" height="1.3"/><rect x="17.75" y="220.85" width="1.3" height="1.3"/><rect x="19.75" y="202.75" width="1.3" height="1.3"/><rect x="19.75" y="220.85" width="1.3" height="1.3"/><rect x="21.75" y="202.75" width="1.3" height="1.3"/><rect x="21.75" y="220.85" width="1.3" height="1.3"/><rect x="23.75" y="202.75" width="1.3" height="1.3"/><rect x="23.75" y="220.85" width="1.3" height="1.3"/><rect x="25.75" y="202.75" width="1.3" height="1.3"/><rect x="25.75" y="220.85" width="1.3" height="1.3"/></g>
<rect x="44" y="198" width="5" height="5.3"/><rect x="44" y="217" width="5" height="5"/>
<path d="M46.5,203 V217" stroke="#c4c4c4" stroke-width="1.1"/>
<circle cx="46.5" cy="209.8" r="2.6"/>
<path d="M48.3,205.7 Q53,201 57.6,199.2 H61.5" fill="none" stroke="#c4c4c4" stroke-width="1.1"/>
<rect x="60.8" y="198" width="3" height="5.2" rx="1.4"/>
<rect x="59" y="205" width="8" height="2.6" fill="#9a9a9a"/>
<path d="M58.5,222 V211 Q58.5,209 60.5,209 H66 Q68,209 68,211 V222 Z"/>
<ellipse cx="96.8" cy="201.8" rx="3.2" ry="5" transform="rotate(42 96.8 201.8)"/>
<path d="M89.5,204 L96,210.5" stroke="#c4c4c4" stroke-width="1.6"/>
<path d="M94.5,206.5 L86,216" stroke="#c4c4c4" stroke-width="2.8"/><path d="M86.5,215.5 L84.8,217.8" stroke="#c4c4c4" stroke-width="1.4"/>
<circle cx="84.2" cy="219.5" r="2"/>
<circle cx="121.7" cy="207.5" r="6.9" fill="none" stroke="#c4c4c4" stroke-width="3"/>
<path d="M127,213 L132.5,218.5" stroke="#c4c4c4" stroke-width="3.2" stroke-linecap="round"/>
<path d="M151.5,212.3 Q160,218 169,211.3" fill="none" stroke="#8f8f8f" stroke-width="2.8"/>
<circle cx="157.3" cy="200.3" r="2" fill="none" stroke="#c4c4c4" stroke-width="1.4"/>
<path d="M155.8,202.8 L158.8,202.8 L157.3,206.5 L146.2,220.8 Z"/>
<path d="M155.8,202.8 L158.8,202.8 L168.8,220.8 L157.3,206.5 Z"/>
<path d="M155.8,203 L146.2,220.8 L149.5,215 L157.3,206 Z"/>
<path d="M18,230.2 H21 L33.8,244.8 H22.5 L18,240 Z"/>
<path d="M18,246 L22,249.2 L18,252.5 Z"/>
<path d="M45,234 H64 L67,249 H45 Z"/>
<g stroke="#454545" stroke-width="1"><circle cx="49.5" cy="233.6" r="2.9"/><circle cx="59.9" cy="233.6" r="2.9"/><circle cx="55.4" cy="250.2" r="2.9"/></g>
<g fill="none" stroke="#c4c4c4" stroke-width="1.7" stroke-linejoin="round"><path d="M80,231.3 H95 L101.7,237.6 V252.5 H87.3 L80,246.6 Z"/><path d="M80,231.3 L87.3,237.6 H101.7 M87.3,237.6 V252.5 M95,231.3 V246.6 H80 M95,246.6 L101.7,252.5"/></g>
<rect x="112" y="233.7" width="10.8" height="16.1"/><rect x="124.9" y="233.7" width="10.9" height="16.1"/>
<g fill="#444"><path d="M117,240.8 H131 V242.8 H117 Z"/><path d="M114.1,241.8 L118.5,237.6 V246 Z"/><path d="M134,241.8 L129.6,237.6 V246 Z"/></g>
<path d="M148.7,235.8 L165.9,232.7 L166.9,248.4 L157.8,243.5 L148.7,251.2 Z" fill="none" stroke="#c4c4c4" stroke-width="1.8"/>
<circle cx="148.7" cy="235.8" r="2.9"/><circle cx="165.9" cy="232.7" r="2.9"/><circle cx="166.9" cy="248.4" r="2.9"/><circle cx="157.8" cy="243.5" r="2.9"/><circle cx="148.7" cy="251.2" r="2.9"/>
<path d="M26.6,262.8 L32.9,269 L26.6,275.8 L20.3,269 Z"/>
<path d="M18,272.6 L23.4,277.8 L18,282.5 Z" fill="#8c8c8c"/>
<rect x="21.2" y="283" width="11.7" height="2"/>
<path d="M51.8,276 Q54.5,269.8 61.4,266.6 L68,264.2 L59.8,276.6 Z"/>
<path d="M59.2,276.9 Q60,280.4 62.6,280.5 Q63.9,280.3 64.8,277.6 Q65.5,275.8 66.6,275.5" fill="none" stroke="#c4c4c4" stroke-width="1.6" stroke-linecap="round"/>
<g fill="#4e4e4e"><rect x="50" y="277" width="1.3" height="1.3"/><rect x="48.6" y="278.8" width="1.3" height="1.3"/><rect x="47.2" y="280.3" width="1.3" height="1.3"/><rect x="50" y="280.3" width="1.3" height="1.3"/><rect x="45.8" y="281.8" width="1.3" height="1.3"/><rect x="48.6" y="281.8" width="1.3" height="1.3"/><rect x="44.4" y="283.3" width="1.3" height="1.3"/><rect x="47.2" y="283.5" width="1.3" height="1.3"/><rect x="45.8" y="285.1" width="1.3" height="1.3"/><rect x="48.6" y="285.1" width="1.3" height="1.3"/></g>
<path d="M87.8,261.8 Q77.2,267.5 77.6,276 Q78.2,282.5 81.9,285.9 Q81.6,279 82.8,273.5 Q84.3,266.5 87.8,261.8 Z"/>
<rect x="90" y="272.2" width="8.6" height="3.6" rx="1"/>
<path d="M87.3,276.5 Q87.3,275.4 88.5,275.4 H101 Q102.2,275.4 102.2,276.5 L100.4,284.7 Q100.2,285.7 99,285.7 H90 Q88.9,285.7 88.7,284.7 Z"/>
<rect x="112" y="263" width="24.1" height="17.8" rx="1.6"/>
<path d="M112.8,282.3 H117.8 Q117.3,285 115.3,285 Q113.3,285 112.8,282.3 Z M130.3,282.3 H135.3 Q134.8,285 132.8,285 Q130.8,285 130.3,282.3 Z"/>
<path d="M136.3,261.8 L122,273" stroke="#454545" stroke-width="4.4" stroke-linecap="round"/>
<path d="M135.8,262.3 L122.5,272.6" stroke="#c4c4c4" stroke-width="2"/>
<ellipse cx="119.4" cy="275" rx="4.3" ry="2.5" transform="rotate(-28 119.4 275)" fill="#c4c4c4" stroke="#454545" stroke-width="1.1"/>
<circle cx="157.8" cy="268.4" r="3"/>
<path d="M155.6,270 H160 L160.3,274.5 Q161.5,276.5 165.5,277.3 L168,278.7 V284 H148 V278.7 L150.5,277.3 Q154.5,276.5 155.4,274.5 Z"/>
<path d="M155.7,279.4 H160.3 L158,283 Z" fill="#454545"/>
</g>
<linearGradient id="tbg" x1="0" y1="0" x2="0" y2="1"><stop offset="0" stop-color="#885C4A"/><stop offset="1" stop-color="#7C5846"/></linearGradient><rect x="18" y="846" width="964" height="32" fill="url(#tbg)"/>
<rect x="18" y="847" width="44" height="31" fill="#B09A91"/>
<path d="M18.5,878 V847.5 H61.5 V878" fill="none" stroke="#f2e6e0" stroke-width="1"/>
<path d="M24,861 Q30,856.5 36,858.5 Q41,859.5 43.5,854 Q45.5,864 42,869.5 Q38.5,873.5 33,873 Q27,872 24,866.5 Z" fill="#6d685a"/>
<path d="M26,866.5 Q31,871 36,870.8 Q41,869.5 43,862" fill="none" stroke="#4e4a40" stroke-width="0.9"/>
<circle cx="21.5" cy="865" r="3.4" fill="#111"/><circle cx="20.6" cy="863.8" r="1" fill="#9a9a9a"/>
<circle cx="27.6" cy="862.6" r="2.4" fill="#e8e8e8"/><circle cx="28.1" cy="862.9" r="1.1" fill="#111"/>
<circle cx="33" cy="863" r="2.4" fill="#e8e8e8"/><circle cx="33.5" cy="863.3" r="1.1" fill="#111"/>
<path d="M35.5,869 L43.5,872.5" stroke="#c87a30" stroke-width="1.4"/><path d="M43,872.3 L48.5,876.5" stroke="#8a8a8a" stroke-width="2.2" stroke-linecap="round"/>
<linearGradient id="dcg" x1="0" y1="0" x2="1" y2="1"><stop offset="0" stop-color="#7b8fe2"/><stop offset="1" stop-color="#5a6ed2"/></linearGradient>
<path d="M82.2,878 V855.7 Q82.2,853.2 84.7,853.2 H105.3 Q107.8,853.2 107.8,855.7 V878 Z" fill="url(#dcg)"/>
<path d="M101.2,874.8 L103.8,878 H101 Z" fill="#7d5846"/>
<path d="M88.6,858.8 Q95,856.6 101.4,858.8 Q104.8,864 104.8,870.6 Q102.6,872.4 99.8,872.4 L98.8,870.9 Q95,871.9 91.2,870.9 L90.2,872.4 Q87.4,872.4 85.2,870.6 Q85.2,864 88.6,858.8 Z" fill="#fafafa"/>
<circle cx="92" cy="866" r="1.85" fill="#6278d8"/><circle cx="98" cy="866" r="1.85" fill="#6278d8"/>
<path d="M915.5,878 V873 Q915.5,868.7 920,868.7 H982 V878 Z" fill="#ffffff" opacity="0.09"/>
<path d="M944.6,868.8 L948.2,864.8 L951.8,868.8 Z" fill="#eef0f4"/>
<path d="M967.5,859.8 V863.6 M970,859.8 V863.6" stroke="#fff" stroke-width="1.2"/>
<rect x="966" y="863.6" width="5.2" height="5.8" fill="#fff"/><rect x="968" y="869" width="1.4" height="5.3" fill="#fff"/>
<rect x="973" y="861.2" width="6.6" height="12.6" fill="none" stroke="#fff" stroke-width="1.3"/><rect x="975" y="859.6" width="2.6" height="1.6" fill="#fff"/>
<rect x="974.5" y="863" width="3.6" height="9.3" fill="#fff"/>
<path d="M972,878 H982 V876 Q982,878 980,878 Z" fill="#000"/>
</g>
</svg>
</body></html>
